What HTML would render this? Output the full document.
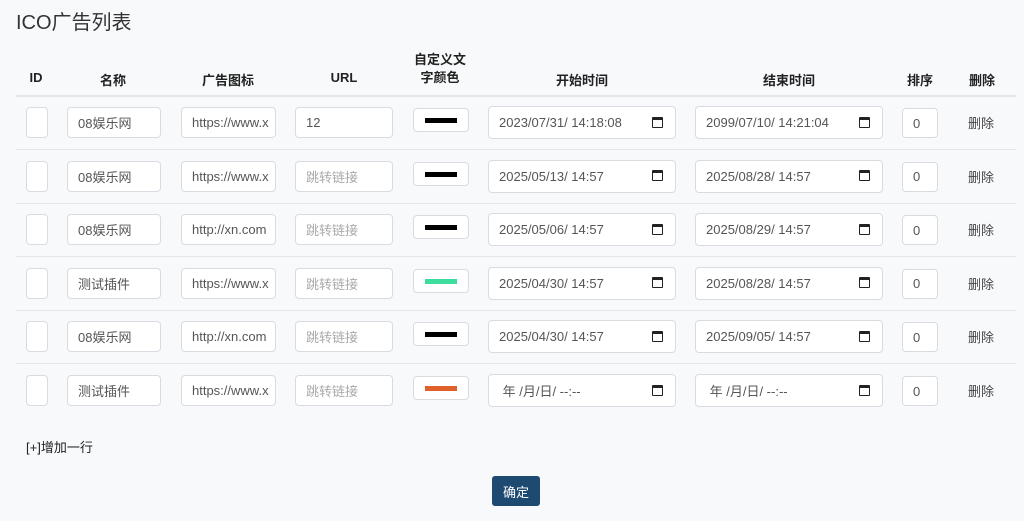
<!DOCTYPE html>
<html><head><meta charset="utf-8"><style>
*{box-sizing:border-box;margin:0;padding:0}
body{width:1024px;height:521px;background:#f8f9fb;font-family:"Liberation Sans","Noto Sans CJK SC",sans-serif;color:#212529;position:relative;overflow:hidden}
.a{position:absolute}
.t{left:16px;top:6px;font-size:20px;color:#333}
.h{font-size:13px;font-weight:bold;color:#222;text-align:center;transform:translateX(-50%);top:70px;white-space:nowrap}
.ln{left:16px;width:1000px;height:1px;background:#e2e5e9}
.in{background:#fff;border:1px solid #d8dce1;border-radius:4px;font-size:13px;color:#555;padding-left:10px;display:flex;align-items:center;white-space:nowrap;overflow:hidden}
.ph{color:#aaa}
.cal{position:absolute;right:12px;top:50%;margin-top:-6px;width:11px;height:11px;border:1.5px solid #222;border-top-width:3px;border-radius:1px}
.sw{position:absolute;left:11px;top:9px;width:32px;height:5px}
.del{font-size:13px;color:#444}
</style></head><body>
<div class="a t">ICO广告列表</div>
<div class="a h" style="left:36px">ID</div>
<div class="a h" style="left:113px">名称</div>
<div class="a h" style="left:228px">广告图标</div>
<div class="a h" style="left:344px">URL</div>
<div class="a h" style="left:440px;top:51px;line-height:18px">自定义文<br>字颜色</div>
<div class="a h" style="left:582px">开始时间</div>
<div class="a h" style="left:789px">结束时间</div>
<div class="a h" style="left:920px">排序</div>
<div class="a h" style="left:982px">删除</div>
<div class="a ln" style="top:95px;height:2px"></div>

<div id="rows"></div>
<script>
var d=[["08娱乐网","https://www.x","12","#000","2023/07/31/ 14:18:08","2099/07/10/ 14:21:04"],
["08娱乐网","https://www.x","","#000","2025/05/13/ 14:57","2025/08/28/ 14:57"],
["08娱乐网","http://xn.com","","#000","2025/05/06/ 14:57","2025/08/29/ 14:57"],
["测试插件","https://www.x","","#3ddc9f","2025/04/30/ 14:57","2025/08/28/ 14:57"],
["08娱乐网","http://xn.com","","#000","2025/04/30/ 14:57","2025/09/05/ 14:57"],
["测试插件","https://www.x","","#e0622a","&nbsp;年 /月/日/ --:--","&nbsp;年 /月/日/ --:--"]];
var h="";
d.forEach(function(r,i){var c=122+i*53.6;var t=c-15;
h+='<div class="a in" style="left:26px;top:'+t+'px;width:22px;height:31px"></div>';
h+='<div class="a in" style="left:67px;top:'+t+'px;width:94px;height:31px">'+r[0]+'</div>';
h+='<div class="a in" style="left:181px;top:'+t+'px;width:95px;height:31px">'+r[1]+'</div>';
h+='<div class="a in" style="left:295px;top:'+t+'px;width:98px;height:31px">'+(r[2]||'<span class="ph">跳转链接</span>')+'</div>';
h+='<div class="a in" style="left:413px;top:'+(c-14)+'px;width:56px;height:24px"><div class="sw" style="background:'+r[3]+'"></div></div>';
h+='<div class="a in" style="left:488px;top:'+(c-16)+'px;width:188px;height:33px">'+r[4]+'<div class="cal"></div></div>';
h+='<div class="a in" style="left:695px;top:'+(c-16)+'px;width:188px;height:33px">'+r[5]+'<div class="cal"></div></div>';
h+='<div class="a in" style="left:902px;top:'+(c-14)+'px;width:36px;height:30px">0</div>';
h+='<div class="a del" style="left:968px;top:'+(c-9)+'px">删除</div>';
if(i<5)h+='<div class="a ln" style="top:'+(c+27)+'px"></div>';});
document.getElementById("rows").innerHTML=h;
</script>
<div class="a" style="left:26px;top:437px;font-size:13px;color:#222">[+]增加一行</div>
<div class="a" style="left:492px;top:476px;width:48px;height:30px;background:#1e4a72;border-radius:3px;color:#fff;font-size:13px;display:flex;align-items:center;justify-content:center">确定</div>
</body></html>
